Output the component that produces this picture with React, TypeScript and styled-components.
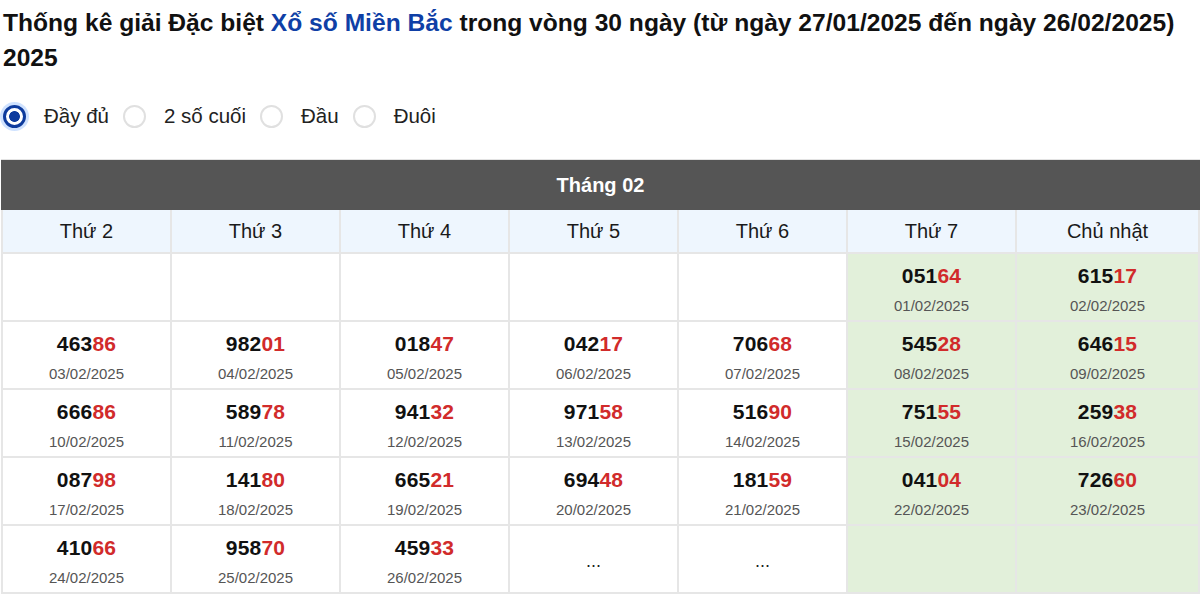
import React, { useState } from 'react';
import styled, { createGlobalStyle } from 'styled-components';

const GlobalStyle = createGlobalStyle`
  body {
    margin: 0;
    background: #ffffff;
    font-family: "Liberation Sans", Arial, sans-serif;
    color: #000000;
  }
`;

const Page = styled.div`
  padding: 5px 1px 0 1px;
`;

const Title = styled.h2`
  font-size: 24.6px;
  font-weight: 700;
  line-height: 35px;
  margin: 0 0 0 2px;
  color: #111111;
`;

const Highlight = styled.span`
  color: #0f3fa6;
`;

const Options = styled.div`
  display: flex;
  align-items: center;
  margin: 28px 0 30px 2px;
  height: 26px;
`;

const Option = styled.label`
  display: flex;
  align-items: center;
  gap: 18px;
  margin-right: 14px;
  font-size: 20.5px;
  color: #222222;
  cursor: pointer;
`;

const Dot = styled.span<{ $on: boolean }>`
  width: 23px;
  height: 23px;
  border-radius: 50%;
  box-sizing: border-box;
  border: ${(p) => (p.$on ? '3px solid #0d3b9e' : '2px solid #e0e0e0')};
  background: ${(p) =>
    p.$on ? 'radial-gradient(circle, #0d3b9e 0 5px, #ffffff 5.8px)' : '#ffffff'};
  box-shadow: ${(p) => (p.$on ? '0 0 0 3px rgba(13, 110, 253, 0.2)' : 'none')};
  flex-shrink: 0;
`;

const Table = styled.div`
  width: 1199px;
  border-top: 1px solid #e3e3e3;
`;

const MonthBar = styled.div`
  height: 50px;
  background: #555555;
  color: #ffffff;
  font-size: 20px;
  font-weight: 700;
  display: flex;
  align-items: center;
  justify-content: center;
`;

const Grid = styled.div`
  display: grid;
  grid-template-columns: repeat(6, 169px) 1fr;
  border-left: 2px solid #e6e6e6;
`;

const DayHead = styled.div`
  height: 42px;
  background: #eef6fe;
  border-right: 2px solid #e6e6e6;
  border-bottom: 2px solid #e6e6e6;
  display: flex;
  align-items: center;
  justify-content: center;
  font-size: 20px;
  color: #1a1a1a;
  box-sizing: content-box;
`;

const Cell = styled.div<{ $weekend: boolean }>`
  height: 62px;
  padding-top: 4px;
  background: ${(p) => (p.$weekend ? '#e2f0da' : '#ffffff')};
  border-right: 2px solid #e6e6e6;
  border-bottom: 2px solid #e6e6e6;
  display: flex;
  flex-direction: column;
  align-items: center;
  justify-content: center;
  gap: 9px;
  box-sizing: content-box;
`;

const Number = styled.div`
  font-size: 21px;
  font-weight: 700;
  color: #111111;
  letter-spacing: 0.2px;
`;

const Tail = styled.span`
  color: #d12b2b;
`;

const DateText = styled.div`
  font-size: 15px;
  color: #555555;
`;

const Dots = styled.div`
  font-size: 18px;
  color: #222222;
`;

type Entry = { num?: string; date?: string; dots?: boolean } | null;

const days = ['Thứ 2', 'Thứ 3', 'Thứ 4', 'Thứ 5', 'Thứ 6', 'Thứ 7', 'Chủ nhật'];

const rows: Entry[][] = [
  [null, null, null, null, null, { num: '05164', date: '01/02/2025' }, { num: '61517', date: '02/02/2025' }],
  [
    { num: '46386', date: '03/02/2025' },
    { num: '98201', date: '04/02/2025' },
    { num: '01847', date: '05/02/2025' },
    { num: '04217', date: '06/02/2025' },
    { num: '70668', date: '07/02/2025' },
    { num: '54528', date: '08/02/2025' },
    { num: '64615', date: '09/02/2025' },
  ],
  [
    { num: '66686', date: '10/02/2025' },
    { num: '58978', date: '11/02/2025' },
    { num: '94132', date: '12/02/2025' },
    { num: '97158', date: '13/02/2025' },
    { num: '51690', date: '14/02/2025' },
    { num: '75155', date: '15/02/2025' },
    { num: '25938', date: '16/02/2025' },
  ],
  [
    { num: '08798', date: '17/02/2025' },
    { num: '14180', date: '18/02/2025' },
    { num: '66521', date: '19/02/2025' },
    { num: '69448', date: '20/02/2025' },
    { num: '18159', date: '21/02/2025' },
    { num: '04104', date: '22/02/2025' },
    { num: '72660', date: '23/02/2025' },
  ],
  [
    { num: '41066', date: '24/02/2025' },
    { num: '95870', date: '25/02/2025' },
    { num: '45933', date: '26/02/2025' },
    { dots: true },
    { dots: true },
    null,
    null,
  ],
];

const options = ['Đầy đủ', '2 số cuối', 'Đầu', 'Đuôi'];

export default function App() {
  const [mode, setMode] = useState(0);

  return (
    <Page>
      <GlobalStyle />
      <Title>
        Thống kê giải Đặc biệt <Highlight>Xổ số Miền Bắc</Highlight> trong vòng 30 ngày (từ ngày
        27/01/2025 đến ngày 26/02/2025) 2025
      </Title>
      <Options>
        {options.map((o, i) => (
          <Option key={o} onClick={() => setMode(i)}>
            <Dot $on={mode === i} />
            {o}
          </Option>
        ))}
      </Options>
      <Table>
        <MonthBar>Tháng 02</MonthBar>
        <Grid>
          {days.map((d) => (
            <DayHead key={d}>{d}</DayHead>
          ))}
          {rows.map((row, r) =>
            row.map((e, c) => (
              <Cell key={`${r}-${c}`} $weekend={c >= 5}>
                {e?.num && (
                  <>
                    <Number>
                      {e.num.slice(0, 3)}
                      <Tail>{e.num.slice(3)}</Tail>
                    </Number>
                    <DateText>{e.date}</DateText>
                  </>
                )}
                {e?.dots && <Dots>...</Dots>}
              </Cell>
            ))
          )}
        </Grid>
      </Table>
    </Page>
  );
}
